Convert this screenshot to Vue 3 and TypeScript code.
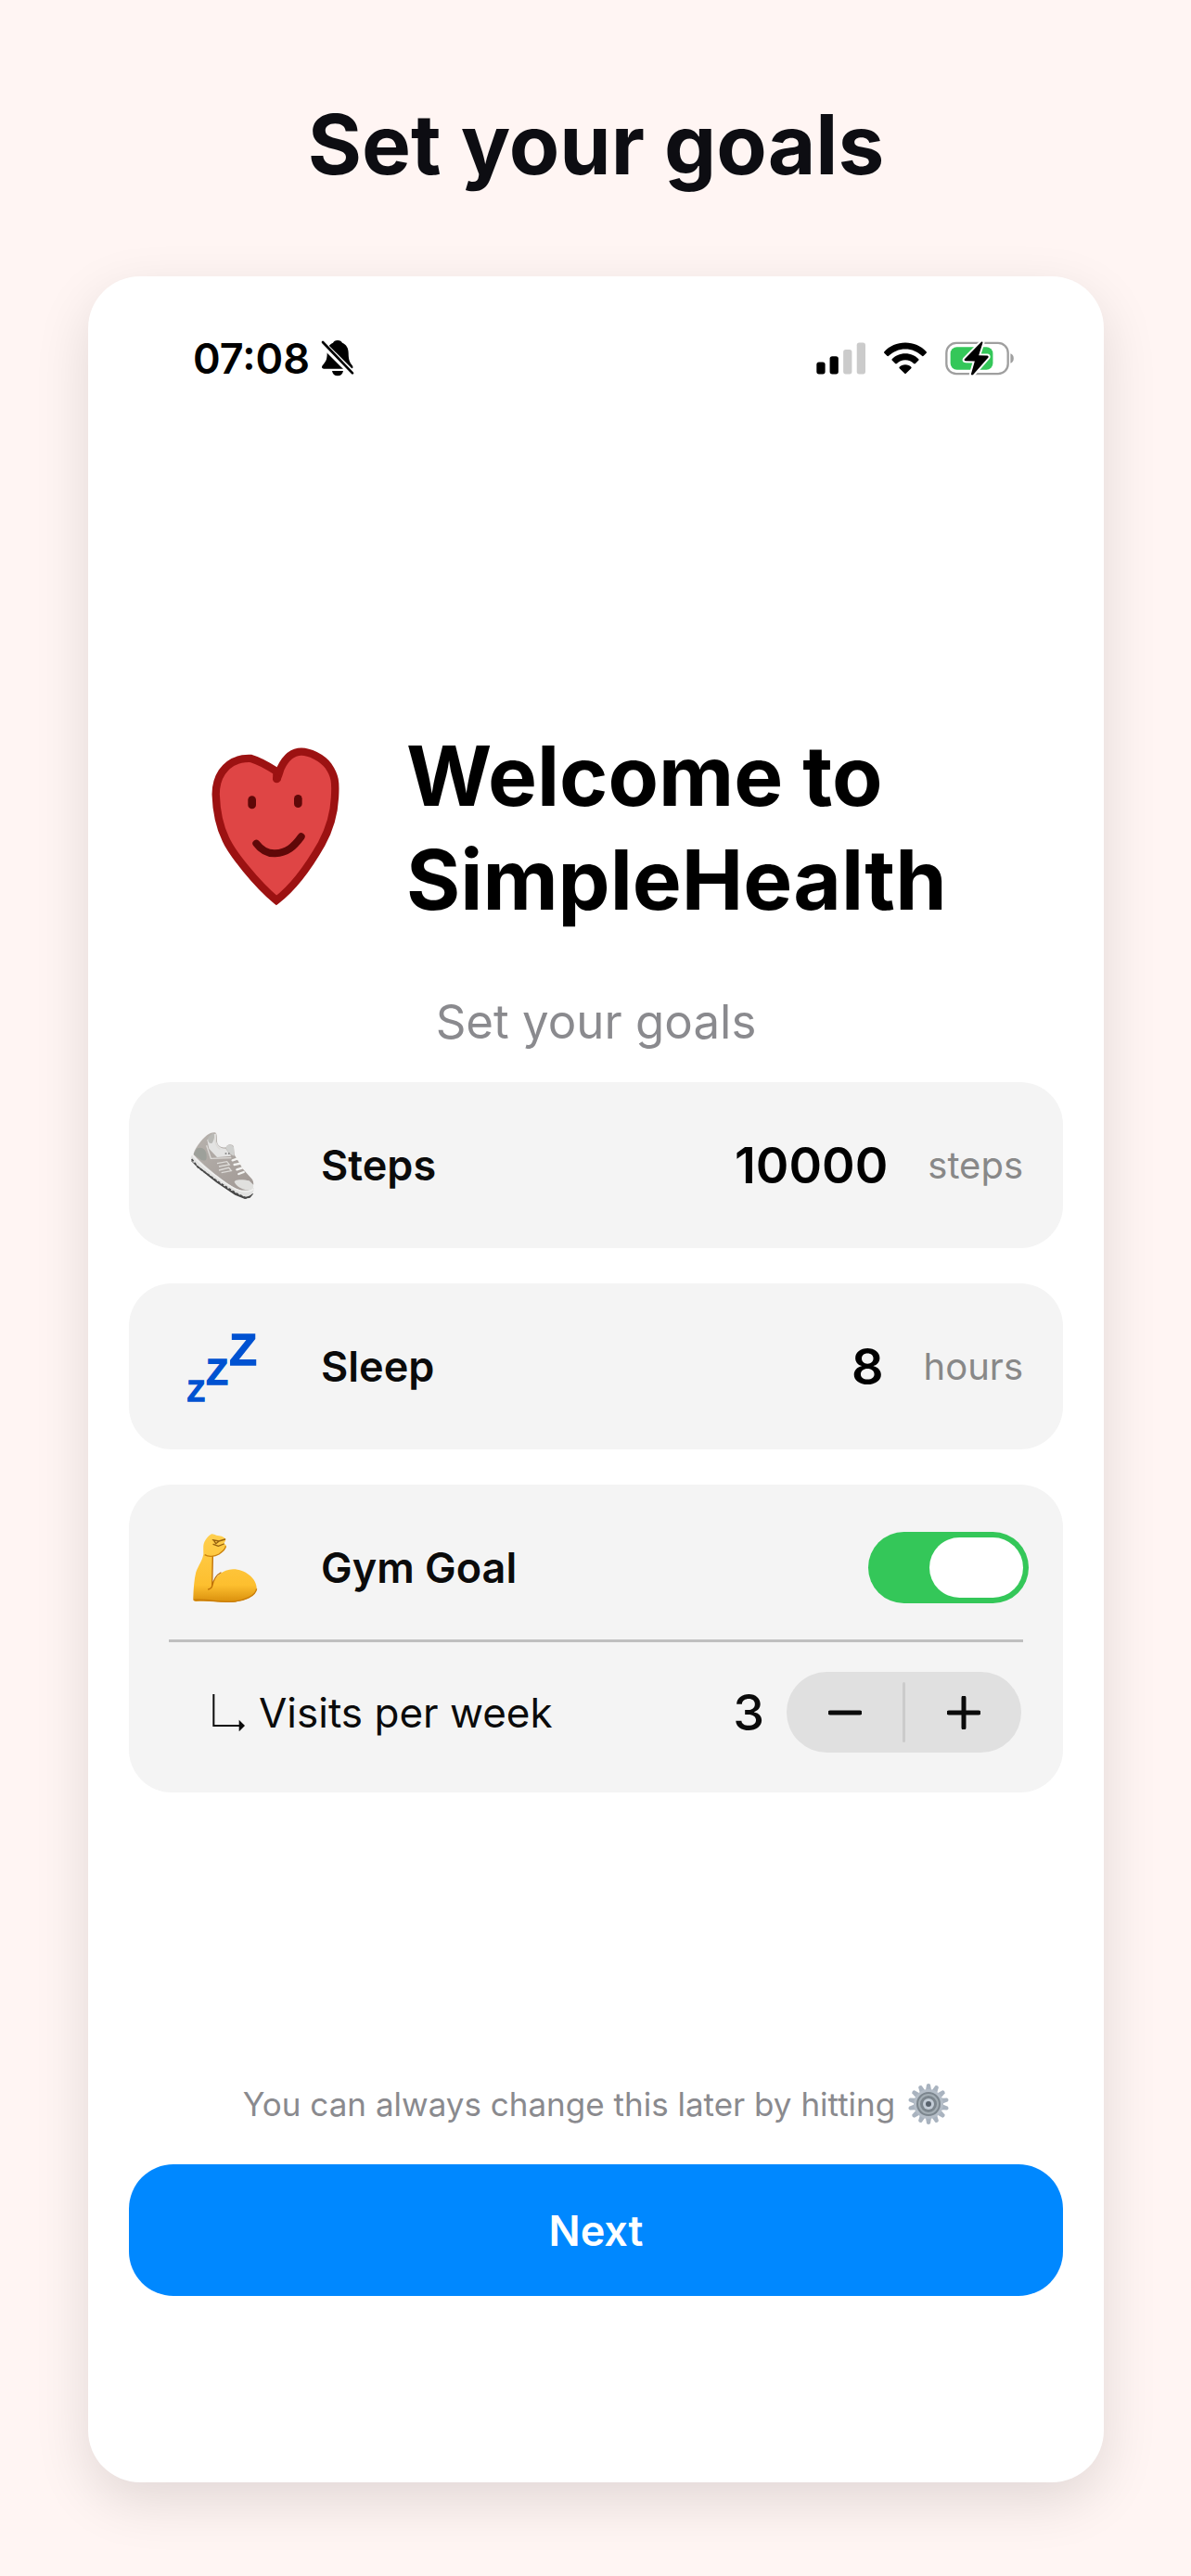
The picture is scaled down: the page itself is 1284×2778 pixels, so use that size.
<script setup lang="ts">
import { ref } from 'vue'

const steps = ref('10000')
const sleep = ref('8')
const gymGoal = ref(true)
const visits = ref(3)

function changeVisits(delta: number): void {
  visits.value = Math.min(7, Math.max(1, visits.value + delta))
}

const teeth: number[] = Array.from({ length: 14 }, (_, i) => (i * 360) / 14)
</script>

<template>
  <div class="page">
    <h1 class="title">Set your goals</h1>

    <main class="screen">
      <div class="status">
        <div class="status-left">
          <span class="time">07:08</span>
          <svg class="bell" viewBox="0 0 108 120" aria-hidden="true">
            <path d="M54 3 C46 3 41 7 39 11 C26 16 20 28 20 44 C20 66 15 72 5 84 C1 90 3 95 9 95 H97 C104 95 105 89 101 84 C93 74 89 66 89 44 C89 28 82 16 69 11 C67 7 62 3 54 3 Z" />
            <path d="M36 102 H72 C70 112 64 118 54 118 C44 118 38 112 36 102 Z" />
            <path d="M-3 6 L110 119" stroke="#fff" stroke-width="21" />
            <path d="M6 9 L102 109" stroke="#000" stroke-width="8" stroke-linecap="round" />
          </svg>
        </div>
        <div class="status-right">
          <svg class="bars" viewBox="0 0 160 104" aria-hidden="true">
            <rect x="1" y="64" width="28" height="39" rx="8" />
            <rect x="44" y="45" width="28" height="58" rx="8" />
            <rect x="88" y="23" width="28" height="80" rx="8" fill="#cbcbcb" />
            <rect x="132" y="1" width="28" height="102" rx="8" fill="#cbcbcb" />
          </svg>
          <svg class="wifi" viewBox="0 0 138 104" aria-hidden="true">
            <path d="M69 1 C42 1 18 12 1 30 Q-1 33 1 35 L10 44 Q13 46 15 44 C30 30 48 22 69 22 C90 22 108 30 123 44 Q125 46 128 44 L137 35 Q139 33 137 30 C120 12 96 1 69 1 Z" />
            <path d="M69 36 C51 36 36 43 26 54 Q24 56 26 58 L37 69 Q39 70 41 69 C49 61 58 57 69 57 C80 57 89 61 97 69 Q99 70 101 69 L112 58 Q114 56 112 54 C102 43 87 36 69 36 Z" />
            <path d="M69 72 C61 72 54 75 50 80 Q48 82 50 84 L67 101 Q69 103 71 101 L88 84 Q90 82 88 80 C84 75 77 72 69 72 Z" />
          </svg>
          <svg class="battery" viewBox="0 0 226 110" aria-hidden="true">
            <rect x="4" y="5" width="200" height="100" rx="32" fill="none" stroke="#9f9f9f" stroke-width="7" />
            <path d="M212 39 C226 43 226 67 212 71 Z" fill="#9f9f9f" />
            <rect x="17" y="18" width="138" height="74" rx="21" fill="#34c759" />
            <path d="M118 1 L63 57 Q60 62 66 63 L96 64 L84 106 Q86 111 91 108 L140 52 Q142 47 137 46 L109 45 L122 4 Q122 0 118 1 Z" stroke="#fff" stroke-width="12" />
            <path d="M118 1 L63 57 Q60 62 66 63 L96 64 L84 106 Q86 111 91 108 L140 52 Q142 47 137 46 L109 45 L122 4 Q122 0 118 1 Z" />
          </svg>
        </div>
      </div>

      <section class="hero">
        <svg class="heart" viewBox="0 0 600 660" aria-hidden="true">
          <path d="M295 182 L295 156 C270 140 240 122 212 114 C170 112 140 126 118 158 C100 185 98 210 98 230 C100 290 108 330 130 375 C150 420 230 520 294 573 C350 530 402 457 440 390 C464 346 480 300 483 240 C486 190 484 170 462 138 C440 110 400 92 375 92 C340 92 320 120 308 145 C302 165 298 175 295 182 Z" fill="#df4545" stroke="#9c1212" stroke-width="25" stroke-miterlimit="2" />
          <circle cx="295" cy="180" r="13" fill="#9c1212" />
          <rect x="202" y="235" width="26" height="42" rx="13" fill="#5f0808" />
          <rect x="351" y="231" width="26" height="42" rx="13" fill="#5f0808" />
          <path d="M229 389 C247 413 268 422 290 421 C328 419 350 400 374 367" fill="none" stroke="#5f0808" stroke-width="24" stroke-linecap="round" />
        </svg>
        <h2 class="welcome">Welcome to<br />SimpleHealth</h2>
      </section>

      <p class="subtitle">Set your goals</p>

      <form class="goals" @submit.prevent>
        <div class="card">
          <div class="row">
            <svg class="emoji" viewBox="-24 30 348 279" aria-hidden="true">
              <defs>
                <linearGradient id="upper" x1="0" y1="0" x2="1" y2="1">
                  <stop offset="0" stop-color="#b8b3ae" />
                  <stop offset="1" stop-color="#a09894" />
                </linearGradient>
              </defs>
              <path d="M50 140 L48 156 L70 178 L130 226 L190 266 L222 279 L240 274 L250 262 L200 262 L120 205 Z" fill="#444" />
              <path d="M52 138 C44 142 46 154 54 160 L134 222 C165 245 195 264 222 272 C240 272 252 260 251 243 L190 235 Z" fill="#e2e2e1" />
              <path d="M50 150 L70 176 L130 220 L196 262 L226 276 L244 270" fill="none" stroke="#4b4b4b" stroke-width="5" stroke-dasharray="9 5" />
              <path d="M126 64 C134 68 130 84 133 98 C137 110 152 114 162 112 C164 100 182 100 186 110 L188 136 L216 182 L246 216 C253 228 250 242 240 248 C222 254 200 250 180 238 C140 212 90 172 56 136 C56 120 80 88 100 72 C108 66 118 62 126 64 Z" fill="url(#upper)" />
              <path d="M66 116 C84 108 100 120 98 146 C98 156 88 156 80 152 L56 134 Z" fill="#9da09a" />
              <path d="M124 68 C133 70 126 88 132 100 C138 114 152 116 160 116 L178 140 L132 144 L106 116 L100 88 Z" fill="#e3e3e2" />
              <path d="M104 78 L118 66 C128 70 122 90 116 98 C106 102 100 92 104 78 Z" fill="#b9b9b5" />
              <path d="M160 114 C162 100 182 100 186 112 L187 140 L172 132 Z" fill="#cfd0ce" />
              <path d="M128 68 C122 84 126 108 142 118 M98 106 L112 148 L178 146 M132 164 L164 158 L172 168 L138 174 M138 186 L170 178 L178 188 L146 194" fill="none" stroke="#dddbd8" stroke-width="4" />
              <path d="M158 132 H174" stroke="#777" stroke-width="5" stroke-dasharray="5 5" />
              <path d="M182 154 L200 148 M188 168 L208 164 M196 184 L214 178 M202 198 L218 192" stroke="#f4f4f2" stroke-width="7" stroke-linecap="round" />
              <path d="M188 224 C190 214 220 216 236 220 L248 232 C254 246 240 252 226 250 C206 246 194 236 188 224 Z" fill="#e0e0de" />
              <path d="M54 140 C90 178 150 224 190 246 C212 258 238 258 250 246" fill="none" stroke="#f0f0ef" stroke-width="4" />
            </svg>
            <label class="label" for="steps">Steps</label>
            <input id="steps" v-model="steps" class="value" type="text" inputmode="numeric" />
            <span class="unit">steps</span>
          </div>
        </div>

        <div class="card">
          <div class="row">
            <svg class="emoji zzz" viewBox="-24 21 348 279" aria-hidden="true">
              <text x="35" y="272" font-size="94">Z</text>
              <text x="97" y="218" font-size="116">Z</text>
              <text x="172" y="156" font-size="146">Z</text>
            </svg>
            <label class="label" for="sleep">Sleep</label>
            <input id="sleep" v-model="sleep" class="value" type="text" inputmode="numeric" />
            <span class="unit">hours</span>
          </div>
        </div>

        <div class="card">
          <div class="row">
            <svg class="emoji" viewBox="-24 672 348 279" aria-hidden="true">
              <defs>
                <linearGradient id="skin" x1="0" y1="0" x2="0" y2="1">
                  <stop offset="0" stop-color="#ffcf4e" />
                  <stop offset="0.75" stop-color="#fdbf2f" />
                  <stop offset="1" stop-color="#d98f0c" />
                </linearGradient>
              </defs>
              <path d="M112 704 C118 701 124 706 130 707 C142 708 154 711 159 718 C161 724 156 730 154 735 C162 736 163 742 160 748 C152 760 140 770 118 776 L116 870 C124 842 150 818 184 817 C226 816 262 850 260 880 C256 906 222 920 180 923 C140 925 110 918 64 921 C56 921 54 915 55 908 C56 880 58 850 64 826 C74 800 84 790 88 768 C88 750 86 738 92 727 C98 716 104 708 112 704 Z" fill="url(#skin)" />
              <path d="M118 776 L116 872 C122 846 132 834 144 828 M116 870 C116 876 110 880 104 882" fill="none" stroke="#bf7006" stroke-width="4" stroke-linecap="round" />
              <path d="M92 770 C104 778 124 776 138 768 C150 760 160 750 160 742" fill="none" stroke="#c9810e" stroke-width="4" />
              <path d="M56 916 C100 914 140 924 180 922 C222 919 256 904 260 880" fill="none" stroke="#c97c08" stroke-width="4" />
              <path d="M118 722 L138 726 L158 720 M154 735 L136 742 L120 736 M122 724 L128 734 L136 728" fill="none" stroke="#96610f" stroke-width="4" stroke-linecap="round" stroke-linejoin="round" />
            </svg>
            <label class="label" for="gym">Gym Goal</label>
            <input id="gym" v-model="gymGoal" class="switch" type="checkbox" role="switch" />
          </div>
          <hr class="divider" />
          <div class="row visits">
            <svg class="arrow" viewBox="0 0 105 120" aria-hidden="true">
              <path d="M4 0 V102 H88" fill="none" stroke="#0b0b0b" stroke-width="6" />
              <path d="M86 83 L105 102 L86 121 Z" fill="#0b0b0b" />
            </svg>
            <span id="visits-label" class="visits-label">Visits per week</span>
            <output class="count" aria-labelledby="visits-label">{{ visits }}</output>
            <div class="stepper">
              <button type="button" aria-label="Fewer visits" @click="changeVisits(-1)">
                <svg viewBox="0 0 36 36" aria-hidden="true"><path d="M2 18 H34" /></svg>
              </button>
              <span class="separator"></span>
              <button type="button" aria-label="More visits" @click="changeVisits(1)">
                <svg viewBox="0 0 36 36" aria-hidden="true"><path d="M2 18 H34 M18 2 V34" /></svg>
              </button>
            </div>
          </div>
        </div>
      </form>

      <footer class="footer">
        <p class="hint">
          <span>You can always change this later by hitting</span>
          <svg class="gear" viewBox="-22 -22 44 44" aria-hidden="true">
            <g fill="#a9b3bf">
              <path v-for="a in teeth" :key="a" d="M-3 -15 L-2 -21 Q0 -23 2 -21 L3 -15 Z" :transform="`rotate(${a})`" />
            </g>
            <circle r="16" fill="#b4bdc7" />
            <circle r="13" fill="#7c868e" />
            <circle r="10" fill="none" stroke="#a3adb4" stroke-width="2" />
            <circle r="6" fill="#c3ccd6" />
            <circle r="3" fill="#59636d" />
          </svg>
        </p>
        <button class="next" type="button">Next</button>
      </footer>
    </main>
  </div>
</template>

<style>
body {
  margin: 0;
  background: #fff5f3;
}
</style>

<style scoped>
.page {
  box-sizing: border-box;
  display: flex;
  flex-direction: column;
  min-height: 100vh;
  padding: 100px 94px 101px 95px;
  background: #fff5f3;
  color: #0b0b0b;
  font-family: Inter, "Liberation Sans", sans-serif;
}

.page *,
.page *::before {
  box-sizing: border-box;
}

.title {
  margin: 0 0 86px;
  color: #0d0d12;
  font-size: 89px;
  font-weight: 700;
  line-height: 112px;
  text-align: center;
}

.screen {
  display: flex;
  flex: 1;
  flex-direction: column;
  padding: 50px 44px 201px;
  border-radius: 56px;
  background: #fff;
  box-shadow: 0 20px 60px rgba(0, 0, 0, 0.12);
}

.status {
  display: flex;
  align-items: center;
  justify-content: space-between;
  height: 76px;
  padding: 0 52px 0 69px;
}

.status-left,
.status-right {
  display: flex;
  align-items: center;
}

.status-left {
  gap: 12px;
}

.status-right {
  gap: 20px;
}

.time {
  color: #000;
  font-size: 45px;
  font-weight: 600;
}

.bell {
  width: 36px;
  height: 40px;
}

.bars {
  width: 53px;
  height: 35px;
}

.wifi {
  width: 46px;
  height: 35px;
}

.battery {
  width: 75px;
  height: 37px;
}

.hero {
  display: flex;
  gap: 38px;
  margin-top: 356px;
  padding-left: 61px;
}

.heart {
  flex: none;
  width: 200px;
  height: 220px;
}

.welcome {
  margin: 0;
  padding-top: 1px;
  color: #000;
  font-size: 89px;
  font-weight: 700;
  line-height: 112px;
  white-space: nowrap;
}

.subtitle {
  margin: 65px 0 33px;
  color: #8a8a8e;
  font-size: 51px;
  line-height: 64px;
  text-align: center;
}

.goals {
  display: flex;
  flex-direction: column;
  gap: 38px;
}

.card {
  padding: 43px;
  border-radius: 46px;
  background: #f4f4f4;
}

.row {
  display: flex;
  align-items: center;
  height: 93px;
}

.emoji {
  flex: none;
  width: 116px;
  height: 93px;
  margin-right: 48px;
}

.zzz {
  fill: #0052d1;
  stroke: #0052d1;
  stroke-width: 4px;
  font-family: "Liberation Sans", sans-serif;
  font-weight: 700;
}

.label {
  flex: none;
  font-size: 45px;
  font-weight: 600;
}

.value {
  flex: 1;
  min-width: 0;
  margin: 0 43px 0 20px;
  padding: 0;
  border: 0;
  outline: 0;
  background: transparent;
  color: #000;
  font: inherit;
  font-size: 54px;
  font-weight: 600;
  text-align: right;
}

.unit {
  color: #888;
  font-size: 40px;
}

.switch {
  flex: none;
  width: 173px;
  height: 77px;
  margin: 0 -6px 0 auto;
  padding: 6px;
  border-radius: 39px;
  background: #d5d5d7;
  appearance: none;
}

.switch::before {
  display: block;
  width: 101px;
  height: 65px;
  border-radius: 33px;
  background: #fff;
  content: "";
}

.switch:checked {
  background: #34c759;
}

.switch:checked::before {
  margin-left: auto;
}

.divider {
  height: 3px;
  margin: 31px 0 32px;
  border: 0;
  background: #bfbfbf;
}

.visits {
  height: 87px;
  padding: 0 2px 0 47px;
}

.arrow {
  width: 35px;
  height: 40px;
}

.visits-label {
  margin-left: 15px;
  font-size: 44px;
}

.count {
  margin: 0 24px 0 auto;
  font-size: 54px;
  font-weight: 500;
}

.stepper {
  display: flex;
  align-items: center;
  width: 253px;
  height: 87px;
  border-radius: 44px;
  background: #e0e0e0;
}

.stepper button {
  display: flex;
  flex: 1;
  align-items: center;
  justify-content: center;
  height: 100%;
  padding: 0;
  border: 0;
  background: none;
}

.stepper svg {
  width: 36px;
  height: 36px;
  fill: none;
  stroke: #0b0b0b;
  stroke-linecap: round;
  stroke-width: 5px;
}

.separator {
  width: 3px;
  height: 65px;
  border-radius: 2px;
  background: #cbcbcb;
}

.footer {
  margin-top: auto;
}

.hint {
  display: flex;
  align-items: center;
  justify-content: center;
  gap: 14px;
  margin: 0 0 41px;
  color: #8a8a8e;
  font-size: 35px;
  line-height: 48px;
}

.gear {
  width: 44px;
  height: 44px;
}

.next {
  display: block;
  width: 100%;
  height: 142px;
  padding: 0;
  border: 0;
  border-radius: 48px;
  background: #08f;
  color: #fff;
  font: inherit;
  font-size: 45px;
  font-weight: 600;
}
</style>
